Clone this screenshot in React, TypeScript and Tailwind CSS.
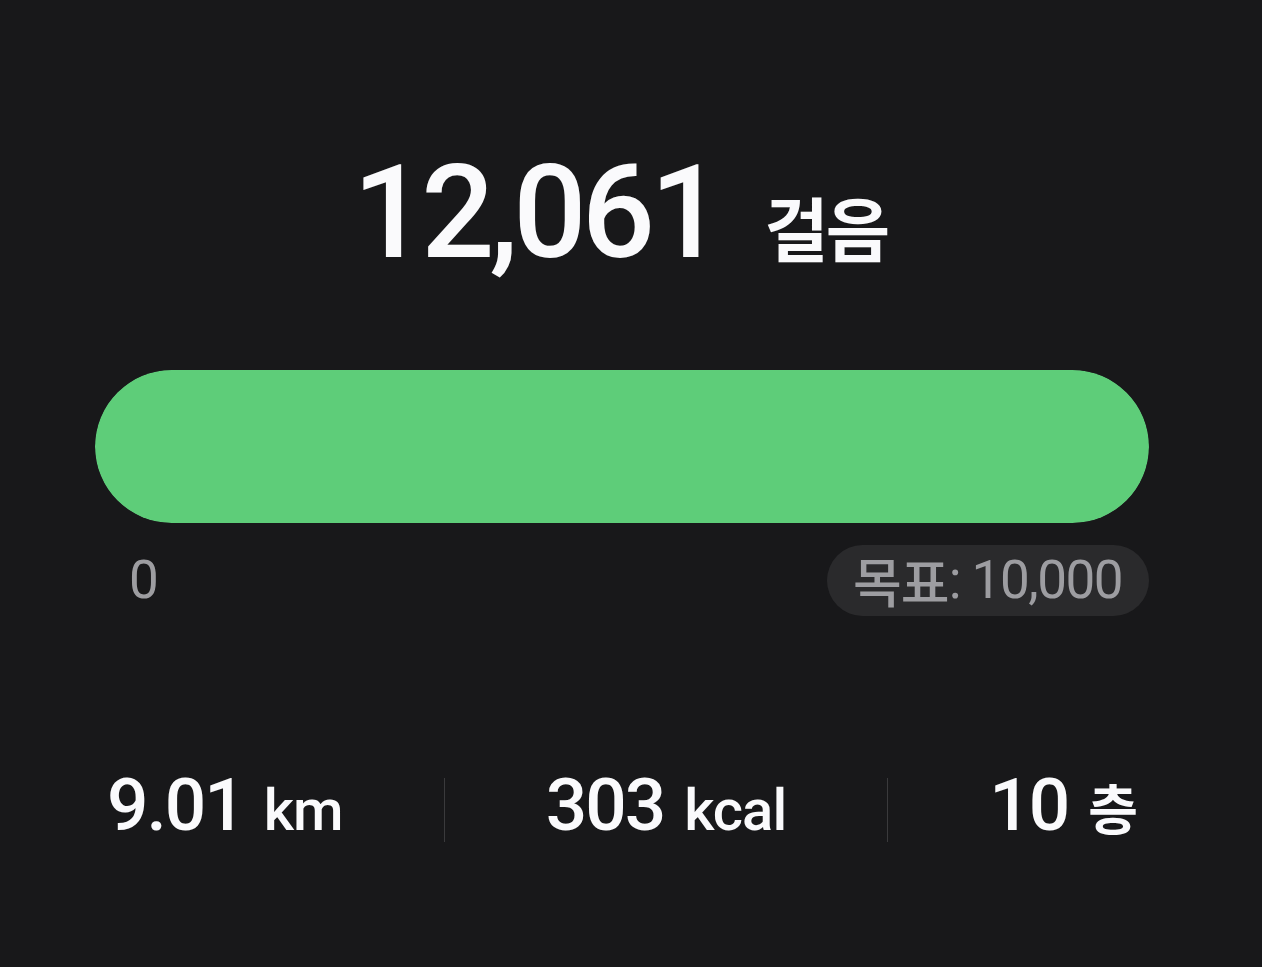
const stats = [
  { value: "9.01", unit: "km", cjk: false },
  { value: "303", unit: "kcal", cjk: false },
  { value: "10", unit: "층", cjk: true },
];

const App = () => {
  return (
    <div
      className="w-[1262px] h-[967px] bg-[#18181a] text-[#fafafc] flex flex-col pl-[95px] pr-[113px] pt-[148px]"
      style={{ fontFamily: 'Roboto, "Noto Sans CJK KR", sans-serif' }}
    >
      {/* step count */}
      <div className="flex items-baseline justify-center gap-[46px] pr-[4px]">
        <span className="text-[129px] leading-none font-medium tracking-[-5px]">12,061</span>
        <span
          className="text-[70px] leading-none font-bold tracking-[-3px]"
          style={{ fontFamily: '"Noto Sans CJK KR", sans-serif' }}
        >
          걸음
        </span>
      </div>

      {/* progress */}
      <div className="mt-[93px] h-[153px] w-full rounded-full bg-[#2a2a2c] overflow-hidden">
        <div className="h-full w-full rounded-full bg-[#5ecd79]" />
      </div>

      <div className="mt-[22px] flex items-center justify-between">
        <span className="pl-[34px] text-[53px] leading-none font-normal text-[#9d9da1]">0</span>
        <div className="h-[71px] flex items-center rounded-full bg-[#2a2a2c] pl-[26px] pr-[27px] text-[53px] leading-none font-normal text-[#9d9da1] tracking-[-1.5px]">
          <span style={{ fontFamily: '"Noto Sans CJK KR", sans-serif' }} className="font-medium text-[53px] tracking-[-1px]">
            목표
          </span>
          <span>: 10,000</span>
        </div>
      </div>

      {/* stats */}
      <div className="mt-[153px] flex items-end justify-between pl-[12px] pr-[11px]">
        {stats.map((s, i) => (
          <div key={s.unit} className="contents">
            {i > 0 && <div className="w-px h-[64px] bg-[#3a3a3c]" />}
            <div className="flex items-baseline gap-[20px]">
              <span className="text-[73px] leading-none font-medium tracking-[-2px]">{s.value}</span>
              <span
                className={s.cjk ? "text-[54px] leading-none font-bold" : "text-[58px] leading-none font-medium tracking-[-1px]"}
                style={s.cjk ? { fontFamily: '"Noto Sans CJK KR", sans-serif' } : undefined}
              >
                {s.unit}
              </span>
            </div>
          </div>
        ))}
      </div>
    </div>
  );
};

export default App;
